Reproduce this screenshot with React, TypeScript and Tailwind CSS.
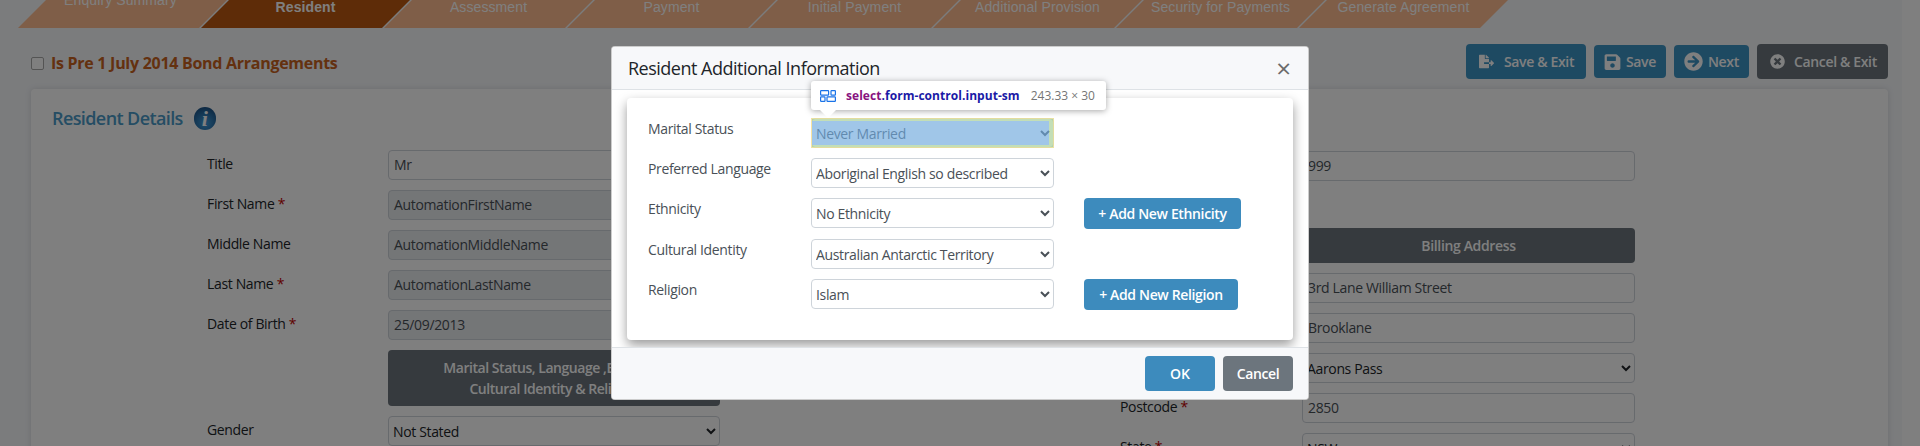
import React from "react";
import { FaFileExport, FaSave, FaArrowCircleRight, FaTimesCircle } from "react-icons/fa";

const font = "[font-family:'Open_Sans','Noto_Sans',sans-serif]";
const steps = ["Enquiry Summary", "Resident", "Assessment", "Payment", "Initial Payment", "Additional Provision", "Security for Payments", "Generate Agreement"];

function Field({ value, ro }: { value: string; ro?: boolean }) {
  return (
    <div className={`h-[30px] w-full rounded-[4px] border border-[#ced4da] pl-[5px] text-[14px] leading-[28px] tracking-[-0.35px] text-[#495057] ${ro ? "bg-[#e9ecef]" : "bg-white"}`}>
      {value}
    </div>
  );
}

function NativeSelect({ value }: { value: string }) {
  return (
    <select defaultValue={value} className="h-[30px] w-[243px] rounded-[4px] border border-[#ced4da] bg-white py-[3px] pl-0 pr-[5px] text-[14px] tracking-[-0.35px] text-[#495057]">
      <option>{value}</option>
    </select>
  );
}

function Label({ children, req }: { children: React.ReactNode; req?: boolean }) {
  return (
    <div className="h-[30px] text-[14px] leading-[28px] tracking-[-0.35px] text-[#212529]">
      {children}
      {req && <span className="text-[#c00000]"> *</span>}
    </div>
  );
}

function ActionButton({ icon, label, dark, w, tall }: { icon: React.ReactNode; label: string; dark?: boolean; w: string; tall?: boolean }) {
  return (
    <div className={`flex items-center rounded-[4px] text-[14px] font-semibold tracking-[-0.35px] text-white ${dark ? "bg-[#6c757d]" : "bg-[#3d94c5]"} ${tall ? "h-[35px]" : "h-[33px]"} ${w}`}>
      {icon}
      {label}
    </div>
  );
}

function ModalRow({ label, value, button, className }: { label: string; value: string; button?: React.ReactNode; className?: string }) {
  return (
    <div className={`flex h-[30px] items-start ${className ?? ""}`}>
      <div className="w-[163px] text-[14px] leading-[22px] tracking-[-0.35px] text-[#495057]">{label}</div>
      <NativeSelect value={value} />
      {button}
    </div>
  );
}

function AddButton({ children, w }: { children: React.ReactNode; w: string }) {
  return (
    <div className={`ml-[30px] flex h-[31px] items-center justify-center rounded-[4px] bg-[#3d8bbd] text-[14px] font-semibold tracking-[-0.35px] text-white ${w}`}>
      {children}
    </div>
  );
}

export default function App() {
  return (
    <div className={`relative h-[446px] w-[1920px] overflow-hidden bg-white ${font}`}>
      <div className="h-full w-[1902px] bg-[#f6f8fb]">
        {/* Stepper */}
        <div className="flex h-[28px] pl-[18px] [font-family:'Liberation_Sans',Arial,sans-serif]">
          {steps.map((s, i) => (
            <div
              key={s}
              className={`mr-[-26px] flex h-[28px] w-[209px] shrink-0 justify-center text-[14px] leading-[14px] tracking-[0.1px] [clip-path:polygon(28px_0,100%_0,calc(100%-28px)_100%,0_100%)] ${i === 1 ? "bg-[#bd5810] font-bold text-white" : "bg-[#ffbc90] text-white"}`}
            >
              <span className={i === 0 ? "-ml-[4px] -mt-[7px]" : ""}>{s}</span>
            </div>
          ))}
        </div>

        {/* Action row */}
        <div className="flex items-center justify-between pl-[31px] pr-[14px] pt-[16px]">
          <div className="mt-[3px] flex items-center">
            <div className="h-[13px] w-[13px] rounded-[2px] border border-[#a8a8a8] bg-white" />
            <span className="ml-[7px] text-[16px] font-bold tracking-[-0.28px] text-[#c8631f]">Is Pre 1 July 2014 Bond Arrangements</span>
          </div>
          <div className="flex items-center gap-[8px]">
            <ActionButton tall w="w-[120px]" label="Save & Exit" icon={<FaFileExport className="ml-[13px] mr-[10px] h-[15px] w-[15px]" />} />
            <ActionButton w="w-[72px]" label="Save" icon={<FaSave className="ml-[10px] mr-[5px] h-[18px] w-[17px]" />} />
            <ActionButton w="w-[75px]" label="Next" icon={<FaArrowCircleRight className="ml-[10px] mr-[5px] h-[19px] w-[19px]" />} />
            <ActionButton tall dark w="w-[131px]" label="Cancel & Exit" icon={<FaTimesCircle className="ml-[13px] mr-[9px] h-[15px] w-[15px]" />} />
          </div>
        </div>

        {/* Panel */}
        <div className="ml-[31px] mt-[10px] h-[400px] w-[1857px] rounded-t-[4px] bg-white pl-[21px] pt-[17px] shadow-[0_0_6px_rgba(0,0,0,0.12)]">
          <div className="flex h-[25px] items-center">
            <span className="text-[18px] font-semibold tracking-[-0.6px] text-[#4a9ac8]">Resident Details</span>
            <span className="ml-[11px] flex h-[23px] w-[22px] items-center justify-center rounded-full bg-[radial-gradient(circle_at_50%_70%,#3f9fe0,#123f70)] [font-family:'Liberation_Serif',serif] text-[22px] font-bold italic leading-none text-white">i</span>
          </div>

          <div className="mt-[19px] flex items-start pl-[155px]">
            {/* Left column */}
            <div className="grid w-[513px] grid-cols-[181px_332px] gap-y-[10px]">
              <Label>Title</Label>
              <Field value="Mr" />
              <Label req>First Name</Label>
              <Field value="AutomationFirstName" ro />
              <Label>Middle Name</Label>
              <Field value="AutomationMiddleName" ro />
              <Label req>Last Name</Label>
              <Field value="AutomationLastName" ro />
              <Label req>Date of Birth</Label>
              <Field value="25/09/2013" ro />
              <div />
              <div className="flex h-[56px] items-center justify-center rounded-[4px] bg-[#6c757d] text-center text-[14px] font-semibold leading-[21px] tracking-[-0.45px] text-white">
                <span>
                  Marital Status, Language ,Ethnicity,
                  <br />
                  Cultural Identity &amp; Religion
                </span>
              </div>
              <Label>Gender</Label>
              <select defaultValue="Not Stated" className="h-[30px] w-full rounded-[4px] border border-[#ced4da] bg-white pl-0 pr-[5px] text-[14px] tracking-[-0.35px] text-[#212529]">
                <option>Not Stated</option>
              </select>
            </div>

            {/* Right column */}
            <div className="ml-[400px] mt-[1px] grid w-[515px] grid-cols-[182px_333px] gap-y-[10px]">
              <div />
              <Field value="999" />
              <div className="col-span-2 h-[27px]" />
              <div />
              <div className="flex h-[35px] items-center justify-center rounded-[4px] bg-[#6c757d] text-[14px] font-semibold tracking-[-0.35px] text-white">Billing Address</div>
              <div />
              <Field value="3rd Lane William Street" />
              <div />
              <Field value="Brooklane" />
              <div />
              <select defaultValue="Aarons Pass" className="h-[30px] w-full rounded-[4px] border border-[#ced4da] bg-white pl-0 pr-[5px] text-[14px] tracking-[-0.35px] text-[#212529]">
                <option>Aarons Pass</option>
              </select>
              <Label req>Postcode</Label>
              <Field value="2850" />
              <Label req>State</Label>
              <select defaultValue="NSW" className="h-[30px] w-full rounded-[4px] border border-[#ced4da] bg-white pl-0 pr-[5px] text-[14px] tracking-[-0.35px] text-[#212529]">
                <option>NSW</option>
              </select>
            </div>
          </div>
        </div>
      </div>

      {/* Backdrop */}
      <div className="absolute inset-0 bg-black/50" />

      {/* Modal */}
      <div className="absolute left-[611px] top-[46px] flex h-[354px] w-[698px] flex-col overflow-hidden rounded-[4px] border border-black/20 bg-white">
        <div className="flex h-[43px] shrink-0 items-center justify-between border-b border-[#dee2e6] bg-[#f7f8fa] pl-[16px] pr-[17px]">
          <span className="text-[18px] tracking-[-0.5px] text-[#212529]">Resident Additional Information</span>
          <span className="text-[26px] leading-none text-[#6b6b6b]">×</span>
        </div>
        <div className="flex-1 px-[15px] pt-[8px]">
          <div className="h-[242px] rounded-[4px] bg-white pl-[21px] pt-[20px] shadow-[0_5px_12px_rgba(0,0,0,0.4)]">
            <div className="relative">
              <ModalRow label="Marital Status" value="Never Married" />
              {/* DevTools inspect highlight */}
              <div className="absolute left-[163px] top-0 h-[30px] w-[243px] border-y-[3px] border-r-[5px] border-l border-y-[rgba(147,196,125,0.55)] border-r-[rgba(147,196,125,0.55)] border-l-[rgba(255,229,153,0.66)] outline outline-1 -outline-offset-1 outline-[rgba(255,229,153,0.66)]">
                <div className="h-full w-full bg-[rgba(111,168,220,0.66)]" />
              </div>
            </div>
            <ModalRow className="mt-[10px]" label="Preferred Language" value="Aboriginal English so described" />
            <ModalRow
              className="mt-[10px]"
              label="Ethnicity"
              value="No Ethnicity"
              button={<AddButton w="w-[157px]">+ Add New Ethnicity</AddButton>}
            />
            <ModalRow className="mt-[11px]" label="Cultural Identity" value="Australian Antarctic Territory" />
            <ModalRow
              className="mt-[10px]"
              label="Religion"
              value="Islam"
              button={<AddButton w="w-[154px]">+ Add New Religion</AddButton>}
            />
          </div>
        </div>
        <div className="flex h-[52px] shrink-0 items-start justify-end gap-[8px] border-t border-[#dee2e6] bg-[#f7f8fa] pr-[15px] pt-[8px]">
          <div className="flex h-[35px] w-[70px] items-center justify-center rounded-[4px] bg-[#3d8bbd] text-[14px] font-semibold text-white">OK</div>
          <div className="flex h-[35px] w-[70px] items-center justify-center rounded-[4px] bg-[#6c757d] text-[14px] font-semibold tracking-[-0.35px] text-white">Cancel</div>
        </div>
      </div>

      {/* DevTools tooltip */}
      <div className="absolute left-[811px] top-[81px] flex h-[29px] w-[295px] items-center rounded-[3px] bg-white pl-[9px] text-[12px] shadow-[0_1px_6px_rgba(0,0,0,0.35)]">
        <svg width="16" height="12" viewBox="0 0 16 12" fill="none" stroke="#1a73e8" strokeWidth="1.2">
          <rect x="0.6" y="0.6" width="8" height="4.6" rx="0.6" />
          <rect x="11" y="0.6" width="4.4" height="4.6" rx="0.6" />
          <rect x="0.6" y="6.8" width="4.4" height="4.6" rx="0.6" />
          <rect x="7" y="6.8" width="8.4" height="4.6" rx="0.6" />
        </svg>
        <span className="ml-[10px] font-bold tracking-[0.05px]">
          <span className="text-[#881280]">select</span>
          <span className="text-[#1a1aa6]">.form-control.input-sm</span>
        </span>
        <span className="ml-[11px] text-[#757575]">243.33 × 30</span>
        <div className="absolute left-[9px] top-[29px] h-0 w-0 border-x-[8px] border-t-[8px] border-x-transparent border-t-white" />
      </div>
    </div>
  );
}
